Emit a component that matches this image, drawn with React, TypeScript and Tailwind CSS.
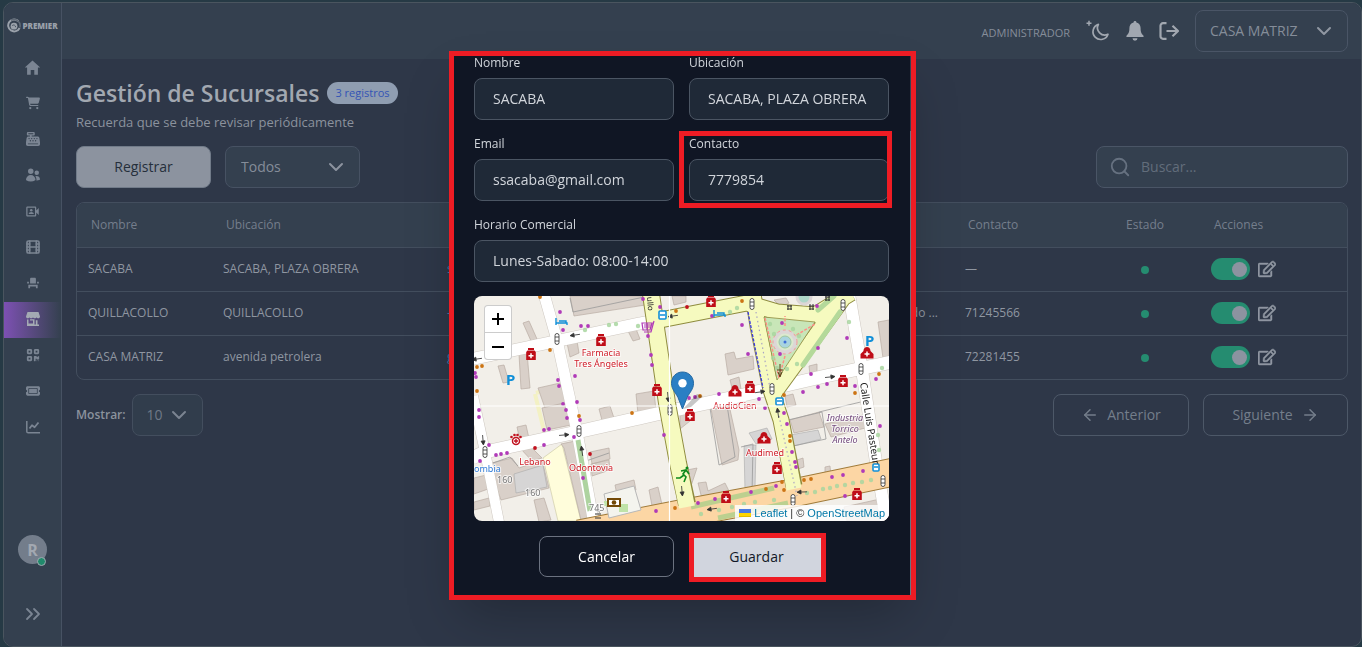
import type { ReactNode } from "react";
import { ArrowLeft, ArrowRight, ChevronDown, ChevronsRight, Film, Search } from "lucide-react";
import { FaCartShopping, FaCashRegister, FaQrcode, FaTicket } from "react-icons/fa6";
import { FaRegEdit } from "react-icons/fa";
import { HiUsers } from "react-icons/hi2";
import { IoMdHome } from "react-icons/io";
import { MdEventSeat, MdOutlineVideoCameraFront } from "react-icons/md";

function IconoTienda() {
    return (
        <svg width="14" height="14" viewBox="0 0 14 14" fill="currentColor">
            <path d="M1.5 0h11L14 4.5c0 1-.8 1.8-1.7 1.8-.8 0-1.4-.5-1.7-1.1-.3.6-1 1.1-1.8 1.1S7.3 5.8 7 5.2c-.3.6-1 1.1-1.8 1.1s-1.5-.5-1.8-1.1c-.3.6-.9 1.100-1.700 1.100C.8 6.300 0 5.500 0 4.500z" />
            <path d="M1 7.5h1.5v4H7v-3H4V7.3h4.5v5.2h1.300V8.300h1.700v4.200H13V14H1z" />
        </svg>
    );
}

function IconoGrafico() {
    return (
        <svg
            width="14"
            height="14"
            viewBox="0 0 14 14"
            fill="none"
            stroke="currentColor"
            strokeWidth="1.5">
            <path d="M.8 1v10.5c0 .8.6 1.3 1.3 1.3H14" />
            <path d="M3.5 8.5 6 5.3l2.6 1.9L12.5 2.5" strokeWidth="1.8" strokeLinejoin="round" />
        </svg>
    );
}

const menu = [
    { label: "Inicio", icon: <IoMdHome size={19} /> },
    { label: "Ventas", icon: <FaCartShopping size={14} /> },
    { label: "Caja", icon: <FaCashRegister size={14} /> },
    { label: "Usuarios", icon: <HiUsers size={16} /> },
    { label: "Cartelera", icon: <MdOutlineVideoCameraFront size={15} /> },
    { label: "Funciones", icon: <Film size={16} strokeWidth={2.5} /> },
    { label: "Salas", icon: <MdEventSeat size={14} /> },
    { label: "Sucursales", icon: <IconoTienda />, active: true },
    { label: "Escanear", icon: <FaQrcode size={14} /> },
    { label: "Boletos", icon: <FaTicket size={14} /> },
    { label: "Reportes", icon: <IconoGrafico /> },
];

const sucursales = [
    {
        nombre: "SACABA",
        ubicacion: "SACABA, PLAZA OBRERA",
        email: "ssacaba@gmail.com",
        horario: "",
        contacto: "—",
    },
    {
        nombre: "QUILLACOLLO",
        ubicacion: "QUILLACOLLO",
        email: "—",
        horario: "Sabado ...",
        contacto: "71245566",
    },
    {
        nombre: "CASA MATRIZ",
        ubicacion: "avenida petrolera",
        email: "gerencia@gmail.com",
        horario: "",
        contacto: "72281455",
    },
];

function Logo() {
    return (
        <div className="flex items-center justify-center gap-px text-[#9aa1aa]">
            <svg width="14" height="16" viewBox="0 0 14 16" fill="none">
                <path d="M11.5 3.2A6 6 0 1 0 12.6 10" stroke="currentColor" strokeWidth="2" />
                <path d="M4 2.2A6.2 6.2 0 0 1 12.8 9.5" stroke="#5f6975" strokeWidth="1.6" />
                <circle cx="7" cy="8.2" r="3.4" fill="currentColor" />
                <path d="M5.2 7.6a2 2 0 0 1 3.4 1.6" stroke="#4b5663" />
            </svg>
            <span className="text-[8px] font-extrabold leading-4">PREMIER</span>
        </div>
    );
}

function Sidebar() {
    return (
        <aside className="flex w-[58px] shrink-0 flex-col border-r border-[#475263] bg-[#34404f]">
            <div className="flex h-[47px] items-center justify-center pb-px">
                <Logo />
            </div>
            <nav className="flex flex-col">
                {menu.map((item) => (
                    <a
                        key={item.label}
                        href="#"
                        aria-label={item.label}
                        className={
                            item.active
                                ? "flex h-9 items-center justify-center bg-linear-to-r from-[#7d50b3] to-[#34404f] pb-0.5 text-[#a4aab3]"
                                : "flex h-9 items-center justify-center pb-0.5 text-[#7b8593]"
                        }>
                        {item.icon}
                    </a>
                ))}
            </nav>
            <div className="mt-auto flex flex-col items-center gap-9 pb-[18px]">
                <div className="relative flex size-[29px] items-center justify-center rounded-full bg-[#737d8b] text-base font-bold text-[#a2a8b1]">
                    R
                    <span className="absolute right-px -bottom-0.5 size-[9px] rounded-full border border-[#a2a8b1] bg-[#218a6c]" />
                </div>
                <button aria-label="Expandir" className="flex h-7 items-center text-[#7b8593]">
                    <ChevronsRight size={24} strokeWidth={1.8} />
                </button>
            </div>
        </aside>
    );
}

function Topbar() {
    return (
        <header className="flex h-14 items-center justify-end bg-[#34404f] pr-[13px] text-[#a1a7b0]">
            <span className="mr-4 pt-1 text-[11px] text-[#858d99]">ADMINISTRADOR</span>
            <button aria-label="Tema" className="mr-4">
                <svg width="24" height="22" viewBox="0 0 24 22" fill="none" stroke="currentColor">
                    <path
                        d="M12.4 4.4a7.7 7.7 0 1 0 9.6 9.8 7.2 7.2 0 0 1-9.6-9.8z"
                        strokeWidth="1.7"
                        strokeLinejoin="round"
                    />
                    <path d="M3 .8v5M.5 3.3h5" strokeWidth="1.5" />
                </svg>
            </button>
            <button aria-label="Notificaciones" className="mr-[15px]">
                <svg width="18" height="20" viewBox="0 0 18 20" fill="currentColor">
                    <path d="M9 0c.9 0 1.4.6 1.4 1.4 2.8.6 4.2 2.9 4.2 5.6 0 4.3 1 5.7 2.7 7.4.7.8.4 1.6-.6 1.6H1.300c-1 0-1.300-.8-.6-1.6C2.4 12.7 3.4 11.3 3.4 7c0-2.700 1.400-5 4.200-5.600C7.600.6 8.100 0 9 0zM6.500 17.200h5a2.500 2.500 0 0 1-5 0z" />
                </svg>
            </button>
            <button aria-label="Salir" className="mr-[15px]">
                <svg
                    width="21"
                    height="18"
                    viewBox="0 0 21 18"
                    fill="none"
                    stroke="currentColor"
                    strokeWidth="2.2"
                    strokeLinejoin="round">
                    <path d="M7.5 1.2H4a2.5 2.5 0 0 0-2.5 2.5v10.6A2.5 2.5 0 0 0 4 16.8h3.5M7.5 9H19M13.5 3.8 19 9l-5.5 5.2" />
                </svg>
            </button>
            <div className="relative w-[153px]">
                <select
                    aria-label="Sucursal"
                    className="h-[42px] w-full appearance-none rounded-lg border border-[#4a5566] bg-[#34404f] px-3.5 text-sm text-[#858d99]">
                    <option>CASA MATRIZ</option>
                </select>
                <ChevronDown
                    size={24}
                    className="pointer-events-none absolute top-[9px] right-3 text-[#9097a2]"
                />
            </div>
        </header>
    );
}

function Toolbar() {
    return (
        <div className="mt-3.5 flex items-center gap-3.5">
            <button className="h-[42px] w-[135px] rounded-lg border border-[#717b89] bg-[#8c939f] text-sm text-[#252f3b]">
                Registrar
            </button>
            <div className="relative w-[135px]">
                <select
                    aria-label="Filtro"
                    className="h-[42px] w-full appearance-none rounded-lg border border-[#475263] bg-[#34404f] px-[15px] text-sm text-[#858d99]">
                    <option>Todos</option>
                </select>
                <ChevronDown
                    size={24}
                    className="pointer-events-none absolute top-[9px] right-3 text-[#8c939f]"
                />
            </div>
            <label className="ml-auto flex h-[42px] w-[252px] items-center gap-2.5 rounded-lg border border-[#4a5566] bg-[#34404f] pl-3 text-[#667180]">
                <Search size={22} className="shrink-0" />
                <input
                    aria-label="Buscar"
                    placeholder="Buscar..."
                    className="w-full min-w-0 text-sm placeholder:text-[#626d7b]"
                />
            </label>
        </div>
    );
}

function Tabla() {
    return (
        <div className="mt-3.5 overflow-hidden rounded-lg border border-[#434e5e]">
            <table className="w-full table-fixed text-left text-xs text-[#8f96a1]">
                <colgroup>
                    <col className="w-[135px]" />
                    <col className="w-[224px]" />
                    <col className="w-[224px]" />
                    <col />
                    <col className="w-[136px]" />
                    <col className="w-[110px]" />
                    <col className="w-[147px]" />
                </colgroup>
                <thead>
                    <tr className="h-11 bg-[#34404f] text-[#747e8c]">
                        <th className="px-3.5 font-normal">Nombre</th>
                        <th className="px-3.5 font-normal">Ubicación</th>
                        <th aria-label="Email" />
                        <th aria-label="Horario" />
                        <th className="px-3.5 font-normal">Contacto</th>
                        <th className="text-center font-normal">Estado</th>
                        <th className="px-3.5 font-normal">Acciones</th>
                    </tr>
                </thead>
                <tbody>
                    {sucursales.map((s) => (
                        <tr key={s.nombre} className="h-11 border-t border-[#434e5e]">
                            <td className="px-[11px]">{s.nombre}</td>
                            <td className="px-[11px]">{s.ubicacion}</td>
                            <td className="px-[11px] text-[#4674a8]">{s.email}</td>
                            <td className="truncate px-4 text-right">{s.horario}</td>
                            <td className="px-[11px]">{s.contacto}</td>
                            <td>
                                <span className="mx-auto mt-0.5 block size-2 rounded-full bg-[#258c70]" />
                            </td>
                            <td className="px-[11px]">
                                <div className="flex items-center gap-2">
                                    <button
                                        role="switch"
                                        aria-checked="true"
                                        aria-label={"Activar " + s.nombre}
                                        className="flex h-[22px] w-[39px] items-center justify-end rounded-full bg-[#258c70] pr-[3px]">
                                        <span className="size-[15px] rounded-full bg-[#8c93a0]" />
                                    </button>
                                    <button aria-label={"Editar " + s.nombre}>
                                        <FaRegEdit size={18} stroke="currentColor" strokeWidth={14} />
                                    </button>
                                </div>
                            </td>
                        </tr>
                    ))}
                </tbody>
            </table>
        </div>
    );
}

function Paginacion() {
    return (
        <div className="mt-3.5 flex items-center text-sm">
            <label htmlFor="mostrar" className="mr-1.5 text-xs font-semibold text-[#8b929d]">
                Mostrar:
            </label>
            <div className="relative w-[71px]">
                <select
                    id="mostrar"
                    className="h-[42px] w-full appearance-none rounded-lg border border-[#434e5e] bg-[#313d4c] px-3.5 text-[#6f7987]">
                    <option>10</option>
                </select>
                <ChevronDown
                    size={24}
                    className="pointer-events-none absolute top-[9px] right-3 text-[#7b8491]"
                />
            </div>
            <button className="ml-auto flex h-[42px] w-[136px] items-center justify-center gap-2 rounded-lg border border-[#4d5868] text-[#747e8b]">
                <ArrowLeft size={18} />
                Anterior
            </button>
            <button className="ml-3.5 flex h-[42px] w-[145px] items-center justify-center gap-2 rounded-lg border border-[#4d5868] text-[#747e8b]">
                Siguiente
                <ArrowRight size={18} />
            </button>
        </div>
    );
}

const edificios = [
    "M96 0h88l-6 8-78 12z",
    "M49 27l6-2 8 18-6 2zM45 58l8-2 3 36-9 1zM24 70l6-1 5 17-6 1zM93 47l10-2 2 12-9 4zM154 35l8-2 4 10-7 2z",
    "M64 92l22-5 8 23-22 5zM162 98l18-3 2 20-18 3zM177 58l7-2 2 16-6 2z",
    "M68 112l22-5 7 22-24 5zM125 113l11-3 5 15-12 3zM43 131l9-2 4 18-9 3zM46 152l9-3 13 13-10 3z",
    "M87 148l14-3 20 77-14 2-17-72zM116 156l19-4 1 11-18 5zM117 168l18-4 1 10-18 6z",
    "M14 168l24-6 7 10 23-8 7 28-48 12zM0 182l12-3 5 13-17 6zM0 206l15-4 1 8-16 4zM60 204l10-2 7 22-12 2z",
    "M141 189l19-5 2 10-19 5zM175 194l9-3 5 22-10 2z",
    "M251 58l9-2 2 7 17-3 1 13-26 6zM256 84l9-3 3 18-8 1zM311 100l8-2 3 11-9 2zM335 70l8-2 0 9-7 2z",
    "M404 26l11-2v36l-6 2zM206 118l8-2 2 9-10 8z",
    "M237 113l18-4 10 45-1 10-16 5z",
    "M316 124l29-8 5 15-30 6zM351 128l38-9 6 12-38 10z",
    "M224 187l8-1 2 9 17-8 5 10-28 6zM351 171l5-1 1 10-6 2zM323 164l6-2 1 9-6 2zM213 174l10-2-6 18-6-10z",
    "M198 0h14v6l-12 3zM300 4l12-2 3 5-8 4zM370 211l45-10v24h-42z",
];

// patios y galpones
const patios = [
    "M40 178l29-9 4 22-31 6z",
    "M270 150l12-1-1 44-10 2z",
    "M275 137l18-5 5 11-16 5z",
    "M316 139l28-5 3 9-27 7z",
];

const puntosMorados = [
    [86, 16], [107, 30], [114, 30], [89, 34], [169, 3], [186, 11], [174, 40], [177, 59], [178, 69],
    [101, 80], [84, 84], [85, 90], [103, 106], [89, 108], [1, 77], [2, 81], [5, 114], [5, 121],
    [92, 114], [93, 122], [106, 124], [70, 134], [75, 133], [100, 141], [70, 149], [15, 149],
    [22, 159], [27, 158], [33, 157], [6, 165], [109, 182], [190, 139], [182, 215], [238, 20],
    [268, 29], [274, 58], [308, 27], [306, 58], [343, 10], [344, 52], [337, 78], [329, 96],
    [353, 88], [344, 91], [381, 90], [373, 42], [245, 98], [221, 101], [215, 102], [285, 103],
    [291, 112], [310, 117], [313, 128], [318, 156], [321, 166], [322, 171], [302, 190], [277, 196],
    [241, 203], [224, 207], [358, 181], [369, 179], [389, 175], [371, 200], [406, 130], [402, 83],
];

const puntosNaranja = [
    [76, 54], [3, 71], [8, 70], [3, 95], [105, 120], [158, 117], [202, 15], [268, 5], [226, 100],
    [310, 99], [316, 140], [316, 145], [308, 186], [330, 184], [337, 183], [292, 193], [310, 194],
    [201, 212], [381, 97], [405, 78], [66, 1],
];

const arbolesVerdes = [
    [111, 34], [135, 29], [142, 28], [164, 30], [256, 16], [263, 12], [296, 28], [300, 38], [325, 40],
    [323, 68], [299, 62], [313, 73], [319, 33], [303, 72], [375, 26], [408, 72], [245, 214],
    [258, 211], [270, 208], [281, 206], [300, 204], [333, 197], [341, 196], [349, 193], [356, 192],
    [363, 190], [371, 189], [379, 187], [388, 186], [397, 184], [227, 218], [404, 139], [405, 154],
];

const farmacias = [
    [57, 58], [127, 44], [183, 94], [237, 5], [276, 91], [216, 119], [369, 85], [303, 172],
    [252, 201], [383, 198],
];

const clinicas = [[261, 95], [393, 57], [290, 142]];

const semaforos = [
    [83, 43], [278, 8], [369, 9], [387, 73], [298, 93], [105, 135], [11, 156], [319, 204],
    [409, 185], [196, 114],
];

const flechas = [
    { x: 101, y: 39, giro: 172 }, { x: 3, y: 63, giro: 172 }, { x: 199, y: 20, giro: 172 },
    { x: 194, y: 101, giro: 85 }, { x: 356, y: 81, giro: -6 }, { x: 286, y: 96, giro: -8 },
    { x: 90, y: 139, giro: -5 }, { x: 108, y: 155, giro: -98 }, { x: 9, y: 144, giro: 85 },
    { x: 304, y: 117, giro: -98 }, { x: 328, y: 196, giro: 178 }, { x: 238, y: 213, giro: 172 },
    { x: 208, y: 195, giro: 85 },
];

const etiqueta = "font-['Noto_Sans'] text-[9px] [paint-order:stroke] stroke-white/70 stroke-2";

function Plano() {
    return (
        <svg
            viewBox="0 0 415 225"
            preserveAspectRatio="xMidYMid slice"
            className="absolute inset-0 size-full"
            role="img"
            aria-label="Mapa de la sucursal">
            <rect width="415" height="225" fill="#f2efe9" />
            <path d="M88 148 69 162 84 225h23z" fill="#fffddb" stroke="#c9c6a0" strokeWidth=".6" />
            <path d="M61 98l10 41M62 97l18-6" stroke="#f3f1c4" strokeWidth="4" />
            <g fill="#d9d0c9" stroke="#b9aca3" strokeWidth=".7">
                {edificios.map((d) => (
                    <path key={d} d={d} />
                ))}
            </g>
            <g fill="#d6d5d5" stroke="#aaa" strokeWidth=".6">
                {patios.map((d) => (
                    <path key={d} d={d} />
                ))}
            </g>
            <path
                d="M267 151l12-3-1 51M314 124l34-8 4 27-33 7M236 112l9 57 16-8-8-52M96 2l3 14 76-16M345 116l50-12M112 165l23-8M16 168l20-7 8 9"
                fill="none"
                stroke="#999"
                strokeWidth=".8"
            />

            <g fill="none" stroke="#cfc9c2" strokeLinejoin="round">
                <path d="M-2 63 83 45l90-19" strokeWidth="13" />
                <path d="M-2 162 11 156l92-20 93-21 60-13 100-23 62-13" strokeWidth="14" />
                <path d="M70-2 83 44l20 92 17 92" strokeWidth="12" />
                <path d="M-1 100 11 156l14 70" strokeWidth="11" />
                <path d="M375-2 388 74l14 92 11 62" strokeWidth="13" />
            </g>
            <g fill="none" stroke="#fff" strokeLinejoin="round">
                <path d="M-2 63 83 45l90-19" strokeWidth="12" />
                <path d="M-2 162 11 156l92-20 93-21 60-13 100-23 62-13" strokeWidth="13" />
                <path d="M70-2 83 44l20 92 17 92" strokeWidth="11" />
                <path d="M-1 100 11 156l14 70" strokeWidth="10" />
                <path d="M375-2 388 74l14 92 11 62" strokeWidth="12" />
            </g>
            <path d="M104 144l12 71" stroke="#aed3a0" strokeWidth="5" />

            <path d="M105 238 206 218 319 197 420 176" fill="none" stroke="#a07b3a" strokeWidth="29" />
            <path d="M105 238 206 218 319 197 420 176" fill="none" stroke="#fcd6a4" strokeWidth="27" />
            <path d="M217 211l83-19M244 222l70-15" stroke="#bcd08f" strokeWidth="5" />
            <g fill="none" stroke="#8f8c3f" strokeLinejoin="round">
                <path d="M177-2 193 107l11 60 9 41" strokeWidth="18" />
                <path d="M279-2 284 30l13 64 10 30 13 66" strokeWidth="17" />
                <path d="M176 26 273 7l30 9 38 3 36-22M372-2 300 97" strokeWidth="17" />
            </g>
            <g fill="none" stroke="#f6fabf" strokeLinejoin="round">
                <path d="M177-2 193 107l11 60 9 44" strokeWidth="16" />
                <path d="M279-2 284 30l13 64 10 30 13 69" strokeWidth="15" />
                <path d="M176 26 273 7l30 9 38 3 36-22M372-2 300 97" strokeWidth="15" />
            </g>
            <path d="M290 21 341 26 303 84z" fill="#c8e6b8" stroke="#8f8c3f" strokeWidth=".8" />
            <path d="M366 16 329 69M360 0l-16 14" stroke="#b4d99a" strokeWidth="5" strokeLinecap="round" />
            <path d="M274 16l15 76" stroke="#3a3ae0" strokeWidth="1.3" strokeDasharray="3 1.5" />
            <path
                d="M282 16l14 76M305 120l18 80"
                stroke="#a9a4c4"
                strokeWidth="1.2"
                strokeDasharray="1.5 3"
            />
            <path
                d="M291 22l14 60M311 46l30-18M311 60l-6 22M311 30V20"
                stroke="#ff8f86"
                strokeWidth="1.5"
                strokeDasharray="3 1.5"
            />
            <circle cx="311" cy="46" r="10.5" fill="#dbe9cf" stroke="#dcd6d6" strokeWidth="4" />
            <circle cx="311" cy="46" r="12" fill="none" stroke="#f49a94" strokeDasharray="3 3" />
            <circle cx="311" cy="46" r="6" fill="#a9d4df" stroke="#9fc7a0" />
            <circle cx="311" cy="46" r="1.5" fill="#3f6fd8" />
            <circle cx="330" cy="1" r="7" fill="#aed7c8" stroke="#dcd6d6" strokeWidth="3" />

            <path d="M130 198l30-8 7 24-32 8z" fill="#f4f4ee" stroke="#b7b7b7" />
            <rect x="145" y="208" width="9" height="8" fill="#bfe3a8" />
            <rect x="130" y="205" width="5" height="5" fill="#bfe3a8" />

            <g fill="#a9d6a0" opacity=".85">
                {arbolesVerdes.map(([x, y]) => (
                    <circle key={x + "-" + y} cx={x} cy={y} r="2.2" />
                ))}
            </g>
            <g fill="#b03ab8">
                {puntosMorados.map(([x, y]) => (
                    <circle key={x + "-" + y} cx={x} cy={y} r="1.9" />
                ))}
            </g>
            <g fill="#cc7414">
                {puntosNaranja.map(([x, y]) => (
                    <circle key={x + "-" + y} cx={x} cy={y} r="1.9" />
                ))}
            </g>
            <g fill="#c1121f">
                <circle cx="61" cy="152" r="1.9" />
                <circle cx="116" cy="158" r="1.9" />
                <circle cx="213" cy="11" r="1.9" />
            </g>

            {semaforos.map(([x, y]) => (
                <g key={x + "-" + y} fill="#fff" stroke="#444" strokeWidth=".9">
                    <rect x={x - 2} y={y - 5.5} width="4" height="11" rx="2" />
                    <path d={"M" + (x - 2) + " " + (y - 2) + "h4m-4 4h4"} />
                </g>
            ))}
            {flechas.map((f) => (
                <path
                    key={f.x + "-" + f.y}
                    d="M-5 0H4M1-2 5 0 1 2z"
                    transform={"translate(" + f.x + " " + f.y + ") rotate(" + f.giro + ")"}
                    fill="#333"
                    stroke="#333"
                    strokeWidth=".8"
                />
            ))}
            <path
                d="M313 10h5m-5 3h5m-4-4v5m3-5v5M335 10h5m-5 3h5m-4-5v6m3-6v6M351 1h5m-5 3h5m-4-4v5m3-5v5M121 214l5 2m-5 2h6m-6 4h6"
                stroke="#333"
            />
            <path d="M306 68v12m-2-4 2 5 2-5M303 74h6" stroke="#5a4316" fill="none" />

            {farmacias.map(([x, y]) => (
                <g key={x + "-" + y} transform={"translate(" + x + " " + y + ")"}>
                    <path d="M-3-6h6v2h-6zM-3.5-3.5h7l1.3 1.5v8h-9.6v-8z" fill="#bf0d17" />
                    <path d="M0-.8v5M-2.5 1.7h5" stroke="#fff" strokeWidth="1.5" />
                </g>
            ))}
            {clinicas.map(([x, y]) => (
                <g key={x + "-" + y} transform={"translate(" + x + " " + y + ")"}>
                    <path d="M0-6C3-6 3.5-3 3.5-2L6.5 1v4.5h-13V1l3-3C-3.5-3-3-6 0-6z" fill="#bf0d17" />
                    <path d="M0-1.5v5M-2.5 1h5" stroke="#fff" strokeWidth="1.5" />
                </g>
            ))}
            <g fill="#c1121f">
                <circle cx="42" cy="145" r="3.5" fill="#fff" stroke="#c1121f" strokeWidth="1.5" />
                <path d="M41.3 143h1.4v4h-1.4zM40 144.3h4v1.4h-4z" />
                <circle cx="37.5" cy="141" r="1.3" />
                <circle cx="40.5" cy="139" r="1.3" />
                <circle cx="43.5" cy="139" r="1.3" />
                <circle cx="46.5" cy="141" r="1.3" />
            </g>
            <g fill="none" stroke="#108fd8" strokeWidth="1.4">
                <path d="M82 22v7M82 27h11v2M85 25h7v2M240 14v7M240 19h11v2M243 17h7v2" />
            </g>
            <g fill="#fff" stroke="#108fd8" strokeWidth="1.6">
                <rect x="185" y="15" width="7" height="8" rx="1" />
                <rect x="302" y="102" width="7" height="7" rx="1" />
                <rect x="399" y="168" width="6" height="7" rx="1" />
                <path d="M186 19h5M303 105h5M400 171h4" />
            </g>
            <g fill="none" stroke="#b03ab8" strokeWidth="1.2">
                <path d="M168 27h10l-2 7h-7zM170 29h7M170 31h7M173 27v7M180 25l-3 11h-7" />
            </g>
            <path
                d="M212 174l-3 4 3 3-2 5M207 175l5-1 3 4M210 179l-4 3h-4"
                fill="none"
                stroke="#0f8a1c"
                strokeWidth="1.6"
            />
            <circle cx="213" cy="172" r="1.5" fill="#0f8a1c" />
            <rect x="134" y="203" width="12" height="7" fill="#fff" stroke="#734a08" strokeWidth="2" />
            <circle cx="140" cy="206.5" r="2.3" fill="#734a08" />

            <g textAnchor="middle" className={etiqueta} fill="#d1202b">
                <text x="127" y="60">Farmacia</text>
                <text x="127" y="71">Tres Ángeles</text>
                <text x="261" y="113">AudioCien</text>
                <text x="291" y="160">Audimed</text>
                <text x="61" y="169">Lebano</text>
                <text x="117" y="175">Odontovia</text>
            </g>
            <g textAnchor="middle" className={etiqueta} fill="#734a7d" fontStyle="italic">
                <text x="371" y="125">Industria</text>
                <text x="371" y="136">Torrico</text>
                <text x="371" y="147">Antelo</text>
            </g>
            <g className={etiqueta} fill="#777">
                <text x="23" y="187">160</text>
                <text x="51" y="200">160</text>
                <text x="115" y="215">745</text>
            </g>
            <text x="0" y="176" className={etiqueta} fill="#2f7bd6">ombia</text>
            <g fontSize="15" fontWeight="bold" fill="#108fd8" className="font-['Noto_Sans']">
                <text x="32" y="89">P</text>
                <text x="391" y="50">P</text>
            </g>
            <g className="font-['Noto_Sans']" fill="#222">
                <text fontSize="10" transform="translate(386 87) rotate(81)">Calle Luis Pasteur</text>
                <text fontSize="8" transform="translate(173 1) rotate(86)">ullo</text>
            </g>
            <path d="M195.5 0v225M0 110h415" stroke="#fff" strokeWidth="1.2" />

            <g transform="translate(197 76)">
                <path d="M12 37 26 22l6 2-12 11z" fill="#000" opacity=".22" />
                <path
                    d="M11.5 0C5 0 .5 5 .5 11.3c0 5.7 3.5 8.7 6.5 14.2L11.5 37l4.5-11.5c3-5.5 6.5-8.5 6.5-14.2C22.5 5 18 0 11.5 0z"
                    fill="#2a7fc4"
                    stroke="#2469a3"
                />
                <circle cx="11.5" cy="11.3" r="4.2" fill="#fff" />
            </g>
        </svg>
    );
}

function Mapa() {
    return (
        <div className="relative mt-3.5 h-[225px] overflow-hidden rounded-lg">
            <Plano />
            <div className="absolute top-[9px] left-2.5 flex w-7 flex-col overflow-hidden rounded-sm border border-black/20 bg-white text-black">
                <button aria-label="Acercar" className="flex h-[27px] items-center justify-center border-b border-[#ccc]">
                    <svg width="12" height="12" stroke="currentColor" strokeWidth="2">
                        <path d="M6 0v12M0 6h12" />
                    </svg>
                </button>
                <button aria-label="Alejar" className="flex h-[26px] items-center justify-center">
                    <svg width="12" height="12" stroke="currentColor" strokeWidth="2">
                        <path d="M0 7h12" />
                    </svg>
                </button>
            </div>
            <div className="absolute right-0 bottom-0 flex items-center gap-[3px] bg-white/80 px-1 font-['Liberation_Sans',sans-serif] text-[11px] leading-4 text-[#0078a8]">
                <svg width="12" height="8">
                    <path fill="#4c7be1" d="M0 0h12v4H0z" />
                    <path fill="#ffd500" d="M0 4h12v3H0z" />
                    <path fill="#e0bc00" d="M0 7h12v1H0z" />
                </svg>
                <a href="#leaflet">Leaflet</a>
                <span className="text-[#333]">| ©</span>
                <a href="#osm">OpenStreetMap</a>
            </div>
        </div>
    );
}

function Campo({
    id,
    label,
    value,
    className = "",
    children,
}: {
    id: string;
    label: string;
    value: string;
    className?: string;
    children?: ReactNode;
}) {
    return (
        <div className={"relative " + className}>
            <label htmlFor={id} className="mb-2 block text-xs leading-[14px] text-[#d1d5db]">
                {label}
            </label>
            <input
                id={id}
                defaultValue={value}
                className="block h-[42px] w-full rounded-lg border border-[#4b5563] bg-[#1f2937] px-[18px] pb-0.5 text-sm text-[#d1d5db]"
            />
            {children}
        </div>
    );
}

function EditarModal() {
    return (
        <div className="fixed inset-0 flex items-start justify-center pt-[51px] pl-[3px]">
            <div
                role="dialog"
                aria-label="Editar sucursal"
                className="relative w-[467px] border-5 border-[#ee1c24] bg-[#101624] pr-[22px] pb-[18px] pl-5 shadow-2xl">
                <form>
                    <div className="grid grid-cols-2 gap-x-[15px] gap-y-[17px]">
                        <Campo id="nombre" label="Nombre" value="SACABA" />
                        <Campo id="ubicacion" label="Ubicación" value="SACABA, PLAZA OBRERA" />
                        <Campo id="email" label="Email" value="ssacaba@gmail.com" />
                        <Campo id="contacto" label="Contacto" value="7779854">
                            <span className="pointer-events-none absolute -top-1.5 -right-[3px] -bottom-[7px] -left-2.5 border-5 border-[#ee1c24]" />
                        </Campo>
                        <Campo
                            id="horario"
                            label="Horario Comercial"
                            value="Lunes-Sabado: 08:00-14:00"
                            className="col-span-2"
                        />
                    </div>
                    <Mapa />
                    <div className="mt-[15px] flex justify-center gap-[15px] text-sm">
                        <button
                            type="button"
                            className="h-[41px] w-[135px] rounded-lg border border-[#6b7280] text-white">
                            Cancelar
                        </button>
                        <div className="relative w-[135px]">
                            <button className="h-[41px] w-full bg-[#d1d5de] text-[#111827]">Guardar</button>
                            <span className="pointer-events-none absolute -top-[3px] -right-0.5 -bottom-[5px] left-0 border-5 border-[#ee1c24]" />
                        </div>
                    </div>
                </form>
                <span className="absolute top-0 right-0 h-[75px] w-px bg-[#374151]" />
                <span className="absolute top-[75px] right-0 bottom-0 w-px bg-[#6b7280]" />
            </div>
        </div>
    );
}

export default function App() {
    return (
        <div className="h-screen overflow-hidden bg-[#263a45] pt-0.5 pl-[3px] font-['Open_Sans','Noto_Sans',sans-serif]">
            <div className="flex h-full overflow-hidden rounded-[10px] border border-[#4a555f] bg-[#2e3748]">
                <Sidebar />
                <div className="flex min-w-0 flex-1 flex-col">
                    <Topbar />
                    <main className="flex flex-col pt-5 pr-[13px] pl-3.5">
                        <div className="flex items-center gap-2">
                            <h1 className="text-[23px] leading-7 font-semibold text-[#a2a8b1]">
                                Gestión de Sucursales
                            </h1>
                            <span className="rounded-full bg-[#8f9db1] px-2 text-[11px] leading-[22px] text-[#3354b5]">
                                3 registros
                            </span>
                        </div>
                        <p className="mt-[5px] text-[13px] leading-5 text-[#8b929d]">
                            Recuerda que se debe revisar periódicamente
                        </p>
                        <Toolbar />
                        <Tabla />
                        <Paginacion />
                    </main>
                </div>
            </div>
            <EditarModal />
        </div>
    );
}
